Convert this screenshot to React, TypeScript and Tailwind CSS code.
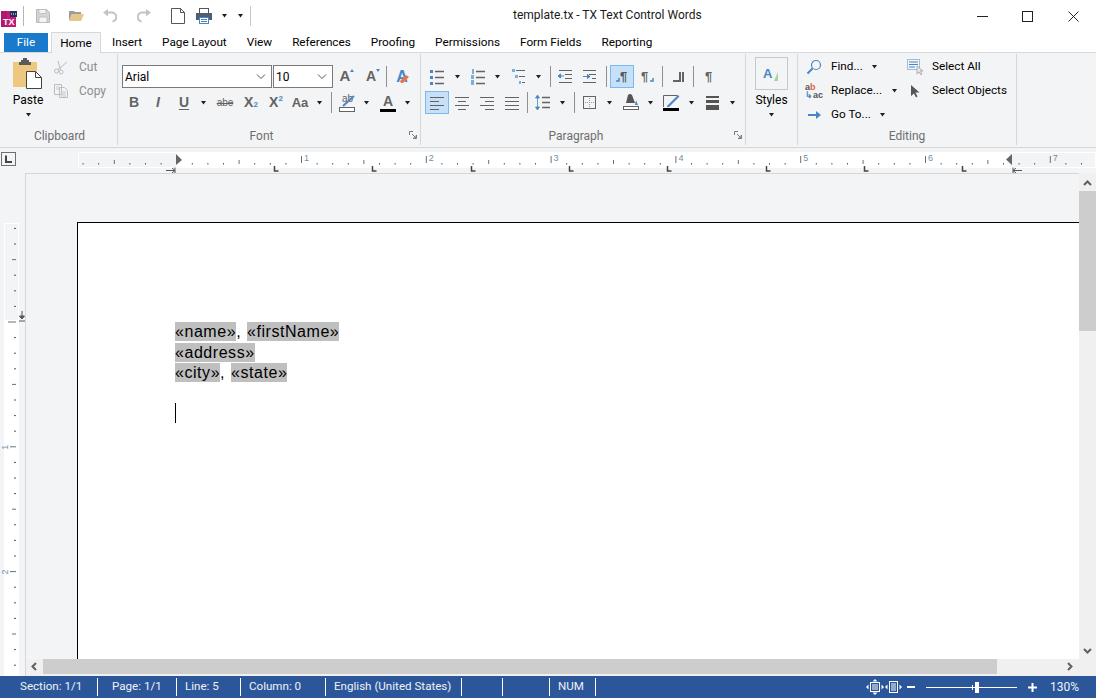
import React from 'react';

const uiFont = { fontFamily: 'Roboto, "Liberation Sans", sans-serif' };

const Caret: React.FC<{ className?: string }> = ({ className = '' }) => (
  <span className={`flex h-[23px] w-[14px] items-center justify-center ${className}`}>
    <svg width="7" height="4" viewBox="0 0 7 4">
      <path d="M1 0h5L3.5 3.5z" fill="#1f1f1f" />
    </svg>
  </span>
);

const Sep: React.FC<{ className?: string }> = ({ className = '' }) => (
  <span className={`my-px h-[21px] w-px bg-[#8f8f8f] ${className}`} />
);

const Ico: React.FC<{ className?: string; active?: boolean; children: React.ReactNode }> = ({ className = '', active, children }) => (
  <span
    className={`flex h-[23px] w-6 items-center justify-center ${active ? 'border border-[#7db9ee] bg-[#c5e0f7]' : ''} ${className}`}
  >
    <svg width={active ? 22 : 24} height={active ? 21 : 23} viewBox={active ? '1 1 22 21' : '0 0 24 23'}>
      {children}
    </svg>
  </span>
);

const GRAY = '#636363';
const BLUE = '#4a86c5';

const Lines: React.FC<{ ys: number[]; x1: number; x2: number; w?: number }> = ({ ys, x1, x2, w = 1 }) => (
  <>
    {ys.map((y) => (
      <path key={y} d={`M${x1} ${y + 0.5}H${x2}`} stroke={GRAY} strokeWidth={w} />
    ))}
  </>
);

const TextGlyph: React.FC<{ className?: string; children: React.ReactNode }> = ({ className = '', children }) => (
  <span
    className={`relative flex h-[23px] w-6 items-center justify-center font-bold text-[#636363] ${className}`}
    style={{ fontFamily: '"Liberation Sans", sans-serif' }}
  >
    {children}
  </span>
);

const Group: React.FC<{ w: string; label: string; launcher?: boolean; labelPad?: string; children: React.ReactNode }> = ({
  w,
  label,
  launcher,
  labelPad = '',
  children,
}) => (
  <div className={`flex h-[91px] flex-col border-r border-[#d6d7d9] ${w}`}>
    <div className="h-[71px] min-h-0">{children}</div>
    <div className={`relative h-[20px] pt-[3px] text-center text-[12px] leading-[17px] text-[#6e6e6e] ${labelPad}`}>
      {label}
      {launcher && (
        <svg className="absolute right-[3px] top-[6px]" width="8" height="8" viewBox="0 0 8 8">
          <path d="M.5 4V.5H4M7.5 4v3.5H4M3 3l4 4M7 4.5V7H4.5" fill="none" stroke="#7a7a7a" />
        </svg>
      )}
    </div>
  </div>
);

const FontSelect: React.FC<{ value: string; w: string; pad: string }> = ({ value, w, pad }) => (
  <div className={`flex h-[23px] items-center justify-between border border-[#7a7a7a] bg-white pr-[5px] text-[12px] text-black ${w} ${pad}`}>
    <span>{value}</span>
    <svg width="10" height="6" viewBox="0 0 10 6">
      <path d="M1 .5l4 4 4-4" fill="none" stroke="#555" />
    </svg>
  </div>
);

const Clipboard = () => (
  <Group w="w-[118px]" label="Clipboard" labelPad="pl-[2px]">
    <div className="flex pt-[4px]">
      <div className="flex w-[56px] flex-col items-center">
        <svg width="30" height="31" viewBox="0 0 30 31">
          <rect x="0" y="4" width="24" height="25" fill="#eec87f" />
          <path d="M8 4V2h2V0h4v2h2v2h2v3H6V4z" fill="#5a5a5a" />
          <path d="M13.5 13.5h9l6 6v11h-15z" fill="#fff" stroke="#444" />
          <path d="M22.5 13.5v6h6" fill="none" stroke="#444" />
        </svg>
        <span className="mt-[3px] text-[12px] leading-[16px] text-black">Paste</span>
        <svg className="mt-[5px]" width="7" height="4" viewBox="0 0 7 4">
          <path d="M1 0h5L3.5 3.5z" fill="#1f1f1f" />
        </svg>
      </div>
      <div className="-mt-[3px] flex flex-col text-[12px] text-[#8d8d8d]">
        <div className="flex h-[24px] items-center">
          <svg width="16" height="16" viewBox="0 0 16 16" className="mr-[10px] -ml-[3px]">
            <circle cx="3.5" cy="12" r="2" fill="none" stroke="#bdbdbd" />
            <circle cx="8" cy="13" r="2" fill="none" stroke="#bdbdbd" />
            <path d="M5 10.5L14 3M7.5 11L5 2" stroke="#bdbdbd" fill="none" />
          </svg>
          Cut
        </div>
        <div className="flex h-[24px] items-center">
          <svg width="16" height="16" viewBox="0 0 16 16" className="mr-[10px] -ml-[3px]">
            <path d="M1.5 1.5h7v10h-7zM6.5 4.5h5l3 3v7h-8z" fill="#f3f4f6" stroke="#bdbdbd" />
            <path d="M3 4h3M3 6h3M8 9h5M8 11h5M8 13h5" stroke="#c9c9c9" />
          </svg>
          Copy
        </div>
      </div>
    </div>
  </Group>
);

const FontGroup = () => (
  <Group w="w-[303px]" label="Font" launcher labelPad="pr-[15px]">
    <div className="pl-[4px] pt-[11px]">
      <div className="flex items-center">
        <FontSelect value="Arial" w="w-[150px]" pad="pl-[2px]" />
        <FontSelect value="10" w="ml-px w-[60px]" pad="pl-[2px]" />
        <TextGlyph className="text-[15px]">
          A
          <span className="absolute right-[3px] top-[4px] h-0 w-0 border-x-[2px] border-b-[3px] border-x-transparent border-b-[#4a86c5]" />
        </TextGlyph>
        <TextGlyph className="ml-[2px] text-[14px]">
          A
          <span className="absolute right-[3px] top-[4px] h-0 w-0 border-x-[2px] border-t-[3px] border-x-transparent border-t-[#4a86c5]" />
        </TextGlyph>
        <Sep className="ml-[3px]" />
        <TextGlyph className="ml-[3px] text-[16px]">
          <span className="text-[#4a86c5]">A</span>
          <svg className="absolute left-[10px] top-[10px]" width="10" height="9" viewBox="0 0 10 9">
            <path d="M0 6l6-6 3 2-6 6H1z" fill="#e5744f" />
          </svg>
        </TextGlyph>
      </div>
      <div className="mt-[3px] flex items-center">
        <TextGlyph className="text-[14px]">B</TextGlyph>
        <TextGlyph className="text-[14px] italic">I</TextGlyph>
        <TextGlyph className="ml-[2px] text-[14px] underline underline-offset-2">U</TextGlyph>
        <Caret />
        <TextGlyph className="ml-[3px] text-[10px] font-normal line-through">abe</TextGlyph>
        <TextGlyph className="ml-[2px] text-[14px]">
          X<sub className="text-[8px] text-[#4a86c5]">2</sub>
        </TextGlyph>
        <TextGlyph className="ml-px text-[14px]">
          X<sup className="text-[8px] text-[#4a86c5]">2</sup>
        </TextGlyph>
        <TextGlyph className="text-[13px]">Aa</TextGlyph>
        <Caret />
        <Sep className="ml-[5px]" />
        <Ico className="ml-[3px]">
          <text x="7" y="11" fontSize="10" fill={GRAY} fontFamily="Liberation Sans">ab</text>
          <path d="M8 15L19 5" stroke={BLUE} strokeWidth="2" />
          <rect x="4.5" y="16.5" width="15" height="4" fill="#fff" stroke={GRAY} />
        </Ico>
        <Caret />
        <TextGlyph className="ml-[3px] pb-[3px] text-[14px] text-[#555]">
          A
          <span className="absolute bottom-[2px] left-[4px] h-[3px] w-4 bg-black" />
        </TextGlyph>
        <Caret />
      </div>
    </div>
  </Group>
);

const ParagraphGroup = () => (
  <Group w="w-[325px]" label="Paragraph" launcher labelPad="pr-[14px]">
    <div className="pl-[4px] pt-[11px]">
      <div className="flex items-center">
        <Ico>
          <path d="M5 5h3v3H5zM5 11h3v3H5zM5 17h3v3H5z" fill={BLUE} />
          <Lines ys={[6, 12, 18]} x1={10} x2={19} w={1.5} />
        </Ico>
        <Caret className="ml-px" />
        <Ico className="ml-[2px]">
          <path d="M6 4h2v5H6zM5 10h3v4H5zM5 15h3v5H5z" fill="#7eaedb" />
          <Lines ys={[6, 12, 18]} x1={10} x2={19} w={1.5} />
        </Ico>
        <Caret />
        <Ico className="ml-[3px]">
          <path d="M5 4h3v3H5zM8 10h3v3H8zM12 16h2v3h-2z" fill="#7eaedb" />
          <path d="M9 5.5h9M12 11.5h6M15 17.5h3" stroke={GRAY} />
        </Ico>
        <Caret />
        <Sep className="ml-[5px]" />
        <Ico className="ml-[2px]">
          <Lines ys={[5, 17]} x1={6} x2={19} />
          <Lines ys={[9, 13]} x1={12} x2={19} />
          <path d="M5 11h6M5 11l2.5-2v4z" stroke={BLUE} fill={BLUE} />
        </Ico>
        <Ico className="ml-px">
          <Lines ys={[5, 17]} x1={5} x2={18} />
          <Lines ys={[9]} x1={11} x2={18} />
          <path d="M5 11.5h7M12 11.5L9.5 9.5v4z" stroke={BLUE} fill={BLUE} />
          <path d="M14 13.5h4" stroke={GRAY} />
        </Ico>
        <Sep className="ml-[4px]" />
        <Ico className="ml-[3px]" active>
          <text x="10" y="16" fontSize="13" fontWeight="700" fill="#555" fontFamily="Liberation Sans">¶</text>
          <path d="M6 16h3v-3" stroke={BLUE} fill="none" strokeWidth="1.5" />
        </Ico>
        <Ico className="ml-px">
          <text x="6" y="16" fontSize="13" fontWeight="700" fill={GRAY} fontFamily="Liberation Sans">¶</text>
          <path d="M18 13v3h-3" stroke={BLUE} fill="none" strokeWidth="1.5" />
        </Ico>
        <Sep className="ml-[3px]" />
        <Ico className="ml-[3px]">
          <path d="M7 15h6v2H7zM13 7h2v10h-2zM16 7h2v10h-2z" fill={GRAY} />
        </Ico>
        <Sep className="ml-[3px]" />
        <Ico className="ml-[3px]">
          <text x="8" y="16" fontSize="13" fontWeight="700" fill={GRAY} fontFamily="Liberation Sans">¶</text>
        </Ico>
      </div>
      <div className="mt-[3px] flex items-center">
        <Ico active>
          <Lines ys={[6, 14]} x1={5} x2={19} />
          <Lines ys={[10, 18]} x1={5} x2={14} />
        </Ico>
        <Ico className="ml-px">
          <Lines ys={[6, 14]} x1={5} x2={19} />
          <Lines ys={[10, 18]} x1={8} x2={16} />
        </Ico>
        <Ico className="ml-px">
          <Lines ys={[6, 14]} x1={5} x2={19} />
          <Lines ys={[10, 18]} x1={10} x2={19} />
        </Ico>
        <Ico className="ml-px">
          <Lines ys={[6, 10, 14, 18]} x1={5} x2={19} />
        </Ico>
        <Sep className="ml-[3px]" />
        <Ico className="ml-[3px]">
          <path d="M6.5 5v13M6.5 4L4.5 7h4zM6.5 19l-2-3h4z" stroke={BLUE} fill={BLUE} strokeWidth="0.8" />
          <Lines ys={[6, 11, 16]} x1={11} x2={19} w={1.5} />
        </Ico>
        <Caret />
        <Sep className="ml-[5px]" />
        <Ico className="ml-[3px]">
          <rect x="5.5" y="5.5" width="12" height="12" fill="none" stroke={GRAY} />
          <path d="M11.5 7v9M7 11.5h9" stroke="#9a9a9a" strokeDasharray="1 1" />
        </Ico>
        <Caret />
        <Ico className="ml-[3px]">
          <path d="M9 4a3 3 0 0 1 4 0l3 8H7l1-4z" fill="#555" />
          <path d="M17 9l2 5h-3z" fill={BLUE} />
          <rect x="4.5" y="15.5" width="15" height="3" fill="#fff" stroke={GRAY} />
        </Ico>
        <Caret />
        <Ico className="ml-[2px]">
          <path d="M4.5 16V4.5h14" fill="none" stroke={GRAY} />
          <path d="M8 15L19 4l1.5 1.5L10 16H8z" fill={BLUE} />
          <rect x="4" y="17" width="16" height="3" fill="#000" />
        </Ico>
        <Caret className="ml-px" />
        <Ico className="ml-[3px]">
          <path d="M5 5h13v2H5zM5 9h13v3H5zM5 14h13v5H5z" fill="#555" />
        </Ico>
        <Caret />
      </div>
    </div>
  </Group>
);

const StylesGroup = () => (
  <Group w="w-[52px]" label="">
    <div className="flex flex-col items-center pt-[3px]">
      <div className="flex h-[33px] w-[33px] items-center justify-center border border-[#c8c8c8]">
        <svg width="20" height="18" viewBox="0 0 20 18">
          <text x="1" y="13" fontSize="13" fontWeight="700" fill={BLUE} fontFamily="Liberation Sans">A</text>
          <path d="M12 16l4-9v9z" fill="#a5d3a0" />
        </svg>
      </div>
      <span className="mt-[2px] text-[12px] leading-[16px] text-black">Styles</span>
      <svg className="mt-[5px]" width="7" height="4" viewBox="0 0 7 4">
        <path d="M1 0h5L3.5 3.5z" fill="#1f1f1f" />
      </svg>
    </div>
  </Group>
);

const EditRow: React.FC<{ icon: React.ReactNode; label: string; caret?: boolean }> = ({ icon, label, caret }) => (
  <div className="flex h-[24px] items-center text-[11.75px] text-black">
    <span className="flex w-[24px] justify-center">{icon}</span>
    <span className="ml-[5px]">{label}</span>
    {caret && <Caret className="ml-[5px]" />}
  </div>
);

const EditingGroup = () => (
  <Group w="w-[219px]" label="Editing">
    <div className="flex pl-[4px] pt-px">
      <div className="w-[101px]">
        <EditRow
          label="Find..."
          caret
          icon={
            <svg width="16" height="16" viewBox="0 0 16 16">
              <circle cx="10" cy="6" r="4.5" fill="none" stroke={BLUE} strokeWidth="1.2" />
              <path d="M6.5 9.5L1.5 14.5" stroke={BLUE} strokeWidth="2" />
            </svg>
          }
        />
        <EditRow
          label="Replace..."
          caret
          icon={
            <span className="flex flex-col text-[9px] font-bold leading-[8px]" style={{ fontFamily: '"Liberation Sans", sans-serif' }}>
              <span className="text-[#555]">a<span className="text-[#e0654a]">b</span></span>
              <span className="text-[#555]"><span className="text-[#4a86c5]">↳</span>ac</span>
            </span>
          }
        />
        <EditRow
          label="Go To..."
          caret
          icon={
            <svg width="14" height="10" viewBox="0 0 14 10">
              <path d="M1 5h9" stroke={BLUE} strokeWidth="2" />
              <path d="M9 1l5 4-5 4z" fill={BLUE} />
            </svg>
          }
        />
      </div>
      <div>
        <EditRow
          label="Select All"
          icon={
            <svg width="18" height="18" viewBox="0 0 18 18">
              <rect x="1.5" y="1.5" width="12" height="10" fill="none" stroke={BLUE} strokeDasharray="1 1" />
              <path d="M3 4h9M3 6.5h9M3 9h6" stroke={BLUE} />
              <path d="M11 8v8l2-2 2 3 1-1-2-3h3z" fill="#e8e8e8" stroke="#9a9a9a" strokeWidth="0.7" />
            </svg>
          }
        />
        <EditRow
          label="Select Objects"
          icon={
            <svg width="12" height="14" viewBox="0 0 12 14">
              <path d="M2 1v11l3-2.5 2 4 1.5-1-2-4h4z" fill="#555" />
            </svg>
          }
        />
      </div>
    </div>
  </Group>
);

const HRuler = () => {
  const ticks: React.ReactNode[] = [];
  for (let i = -6; i <= 59; i++) {
    const x = 176.7 + i * 15.6;
    if (x < 80 || x > 1094) continue;
    if (i % 8 === 0) {
      if (i !== 0) ticks.push(<path key={i} d={`M${x} 8v7`} stroke="#6f6f6f" />);
    } else if (i % 4 === 0) {
      ticks.push(<path key={i} d={`M${x} 12v4`} stroke="#6f6f6f" />);
    } else {
      ticks.push(<path key={i} d={`M${x} 15v1.5`} stroke="#555" />);
    }
  }
  const tabs = [274, 372, 471, 569, 667, 766, 864, 962];
  return (
    <svg width="1096" height="25" viewBox="0 0 1096 25" className="block">
      <rect x="1.5" y="4.5" width="14" height="13" fill="#f3f4f6" stroke="#6f6f6f" />
      <path d="M6 7.5v6.5h6" fill="none" stroke="#444" strokeWidth="2" />
      <rect x="78.5" y="4.5" width="98" height="15" fill="#f3f4f6" stroke="#fff" />
      <rect x="177" y="4" width="831" height="16" fill="#fff" />
      <rect x="1008.5" y="4.5" width="87" height="15" fill="#f3f4f6" stroke="#fff" />
      {ticks}
      {[1, 2, 3, 4, 5, 6, 7].map((n) => (
        <text key={n} x={176.7 + n * 124.8 + 2.5} y="13" fontSize="9" fill="#6b8fb0" fontFamily="Liberation Sans">
          {n}
        </text>
      ))}
      <path d="M176 6l6 6-6 5z" fill="#666" />
      <path d="M1012 6l-6 5.5 6 5.5z" fill="#666" />
      <path d="M166 22.5h9M175 19.5v6M172 20l3 2.5-3 2.5" fill="none" stroke="#555" />
      <path d="M1022 22.5h-9M1013 19.5v6M1016 20l-3 2.5 3 2.5" fill="none" stroke="#555" />
      {tabs.map((x) => (
        <path key={x} d={`M${x + 0.5} 18v5h4`} fill="none" stroke="#444" strokeWidth="1.5" />
      ))}
    </svg>
  );
};

const VRuler = () => {
  const ticks: React.ReactNode[] = [];
  for (let i = -6; i <= 22; i++) {
    const y = 149 + i * 15.6;
    if (i % 8 === 0) {
      ticks.push(<path key={i} d={`M${i === 0 ? 8 : 10} ${y}H16`} stroke="#6f6f6f" />);
    } else if (i % 4 === 0) {
      ticks.push(<path key={i} d={`M12 ${y}H16`} stroke="#6f6f6f" />);
    } else {
      ticks.push(<path key={i} d={`M14 ${y}H16`} stroke="#555" />);
    }
  }
  return (
    <svg width="25" height="503" viewBox="0 0 25 503" className="block">
      <rect x="4.5" y="50.5" width="14" height="97" fill="#f3f4f6" stroke="#fff" />
      <rect x="4" y="148" width="15" height="355" fill="#fff" />
      {ticks}
      {[1, 2].map((n) => (
        <text key={n} transform={`translate(8 ${149 + n * 124.8 + 3}) rotate(-90)`} fontSize="9" fill="#6b8fb0" fontFamily="Liberation Sans">
          {n}
        </text>
      ))}
      <path d="M22 138v8M19.5 143l2.5 3 2.5-3zM19 148h6" fill="#555" stroke="#555" />
    </svg>
  );
};

const Field: React.FC<{ className?: string; children: React.ReactNode }> = ({ className = '', children }) => (
  <span className={`inline-block h-[19px] bg-[#bfbfbf] leading-[19px] tracking-[0.55px] ${className}`}>{children}</span>
);

const Arrow: React.FC<{ d: string }> = ({ d }) => (
  <svg width="9" height="9" viewBox="0 0 9 9">
    <path d={d} fill="none" stroke="#606060" strokeWidth="2" />
  </svg>
);

const Document = () => (
  <div className="flex h-[503px]">
    <div className="w-[25px] shrink-0">
      <VRuler />
    </div>
    <div className="flex min-w-0 flex-1 flex-col border-l border-t border-[#d6d7d9]">
      <div className="flex min-h-0 flex-1 flex-col bg-[#f3f4f6] pl-[51px] pt-[48px]">
        <div
          className="flex-1 border-l border-t border-black bg-white pl-[97px] pt-[97px] text-[16px] text-black"
          style={{ fontFamily: '"Liberation Sans", Arial, sans-serif' }}
        >
          <div className="h-[20.5px]">
            <Field>«name»</Field>, <Field className="ml-[2px]">«firstName»</Field>
          </div>
          <div className="h-[20.5px]">
            <Field>«address»</Field>
          </div>
          <div className="h-[20.5px]">
            <Field>«city»</Field>, <Field className="ml-[2px]">«state»</Field>
          </div>
          <div className="mt-[21px] h-[20px] w-px bg-black" />
        </div>
      </div>
      <div className="flex h-[17px] items-center bg-[#f0f0f0] pb-[2px]">
        <span className="flex w-[17px] justify-center">
          <Arrow d="M6 1L2.5 4.5 6 8" />
        </span>
        <span className="h-[15px] w-[954px] bg-[#cdcdcd]" />
        <span className="ml-auto mr-[5px] flex">
          <Arrow d="M3 1l3.5 3.5L3 8" />
        </span>
      </div>
    </div>
    <div className="flex w-[17px] shrink-0 flex-col items-center bg-[#f0f0f0]">
      <span className="flex h-[18px] items-center pt-[3px]">
        <Arrow d="M1 6l3.5-3.5L8 6" />
      </span>
      <span className="h-[140px] w-full bg-[#cdcdcd]" />
      <span className="mt-auto flex h-[19px] items-start pt-[6px]">
        <Arrow d="M1 3l3.5 3.5L8 3" />
      </span>
      <span className="h-[17px]" />
    </div>
  </div>
);

const StatusCell: React.FC<{ w: string; pad?: string; children?: React.ReactNode }> = ({ w, pad = 'pl-2', children }) => (
  <div className={`relative flex h-full items-center ${w} ${pad}`}>
    {children}
    <span className="absolute right-0 top-[2px] h-[18px] w-px bg-white" />
  </div>
);

const StatusBar = () => (
  <div className="flex h-[22px] items-center bg-[#2b579a] text-[11.6px] text-[#eef2f8]">
    <StatusCell w="w-[98px]" pad="pl-5">Section: 1/1</StatusCell>
    <StatusCell w="w-[79px]" pad="pl-[14px]">Page: 1/1</StatusCell>
    <StatusCell w="w-[64px]">Line: 5</StatusCell>
    <StatusCell w="w-[85px]">Column: 0</StatusCell>
    <StatusCell w="w-[136px]">English (United States)</StatusCell>
    <StatusCell w="w-[41px]" />
    <StatusCell w="w-[47px]" />
    <StatusCell w="w-[46px]">NUM</StatusCell>
    <div className="ml-auto flex items-center">
      <svg width="18" height="16" viewBox="0 0 18 16" className="mr-px">
        <path d="M9 0l2.5 2.5h-5zM9 16l-2.5-2.5h5zM0 8l2.5-2.5v5zM18 8l-2.5-2.5v5z" fill="#fff" />
        <rect x="4.5" y="3.5" width="9" height="9" fill="none" stroke="#fff" />
        <path d="M6 6h6M6 8h6M6 10h6" stroke="#fff" />
      </svg>
      <svg width="17" height="14" viewBox="0 0 17 14">
        <path d="M0 7l2.5-2.5v5zM17 7l-2.5-2.5v5z" fill="#fff" />
        <rect x="4.5" y="1.5" width="8" height="11" fill="none" stroke="#fff" />
        <path d="M6 4h5M6 6h5M6 8h5M6 10h5" stroke="#fff" />
      </svg>
      <span className="ml-[5px] h-[2px] w-[8px] bg-white" />
      <div className="relative ml-[11px] h-px w-[91px] bg-white">
        <span className="absolute left-[49px] top-[-5px] h-[11px] w-[4px] bg-white" />
        <span className="absolute left-[46px] top-[-2px] h-[5px] w-px bg-white" />
      </div>
      <svg width="9" height="9" viewBox="0 0 9 9" className="ml-[11px]">
        <path d="M0 4.5h9M4.5 0v9" stroke="#fff" strokeWidth="2" />
      </svg>
      <span className="ml-[13px] mr-[17px] text-[12px]">130%</span>
    </div>
  </div>
);

const TitleBar = () => (
  <div className="relative flex h-[32px] items-center bg-white">
    <svg width="22" height="22" viewBox="0 0 22 22" className="ml-px">
      <rect x="0" y="6" width="15" height="16" fill="#b0186f" />
      <path d="M6 6h9v16H6z" fill="#d11f7f" opacity="0.6" />
      <rect x="9" y="6" width="7" height="6" fill="#23305c" />
      <path d="M10 9h5" stroke="#fff" strokeDasharray="1 1" />
      <text x="2" y="20" fontSize="9" fontWeight="700" fill="#fff" fontFamily="Liberation Sans">TX</text>
    </svg>
    <span className="h-[20px] w-px bg-[#b5b5b5]" />
    <svg width="14" height="14" viewBox="0 0 14 14" className="ml-[12px]">
      <path d="M.5.5h10l3 3v10H.5z" fill="#d4d4d4" stroke="#b9b9b9" />
      <path d="M3 .5h7v4H3zM3 8h8v5.5H3z" fill="#f4f4f4" stroke="#b9b9b9" strokeWidth="0.8" />
    </svg>
    <svg width="15" height="12" viewBox="0 0 15 12" className="ml-[19px]">
      <path d="M0 1h5l1 1h6v2H3L0 11z" fill="#9c9c9c" />
      <path d="M3 4h12l-3 7H0z" fill="#e6c78b" />
    </svg>
    <svg width="14" height="14" viewBox="0 0 14 14" className="ml-[19px]">
      <path d="M3 3.5h5a4.5 4.5 0 0 1 1.5 9" fill="none" stroke="#c4c4c4" strokeWidth="2" />
      <path d="M5 0v7.5L0 3.5z" fill="#c4c4c4" />
    </svg>
    <svg width="14" height="14" viewBox="0 0 14 14" className="ml-[20px] -scale-x-100">
      <path d="M3 3.5h5a4.5 4.5 0 0 1 1.5 9" fill="none" stroke="#c4c4c4" strokeWidth="2" />
      <path d="M5 0v7.5L0 3.5z" fill="#c4c4c4" />
    </svg>
    <svg width="14" height="16" viewBox="0 0 14 16" className="ml-[20px]">
      <path d="M.5.5h9l4 4v11H.5z" fill="#fff" stroke="#555" />
      <path d="M9.5.5v4h4" fill="none" stroke="#555" />
    </svg>
    <svg width="16" height="16" viewBox="0 0 16 16" className="ml-[11px]">
      <rect x="3.5" y=".5" width="9" height="5" fill="#fff" stroke="#555" />
      <rect x="0" y="5" width="16" height="7" fill="#4f5f70" />
      <rect x="3.5" y="9.5" width="9" height="6" fill="#fff" stroke={BLUE} />
      <path d="M5 11.5h6M5 13.5h6" stroke={BLUE} />
    </svg>
    <Caret className="ml-[5px]" />
    <Caret className="ml-[2px]" />
    <span className="ml-[3px] h-[20px] w-px bg-[#c8c8c8]" />
    <span className="absolute left-[513px] top-[7px] text-[12px] leading-[17px] text-[#1a1a1a]">template.tx - TX Text Control Words</span>
    <div className="ml-auto flex items-center">
      <svg width="11" height="11" viewBox="0 0 11 11">
        <path d="M0 5.5h11" stroke="#222" />
      </svg>
      <svg width="11" height="11" viewBox="0 0 11 11" className="ml-[34px]">
        <rect x=".5" y=".5" width="10" height="10" fill="none" stroke="#222" />
      </svg>
      <svg width="11" height="11" viewBox="0 0 11 11" className="ml-[35px] mr-[17px]">
        <path d="M.5.5l10 10M10.5.5l-10 10" stroke="#222" />
      </svg>
    </div>
  </div>
);

const tabs = ['Insert', 'Page Layout', 'View', 'References', 'Proofing', 'Permissions', 'Form Fields', 'Reporting'];

const TabStrip = () => (
  <div className="flex h-[20px] items-end bg-white pl-[4px] text-[11.75px] text-black">
    <div className="flex h-[19px] w-[44px] items-center justify-center bg-[#1979ca] text-white">File</div>
    <div className="relative z-10 -mb-px ml-[3px] flex h-[21px] w-[50px] items-center justify-center border-x border-t border-[#d6d7d9] bg-[#f3f4f6] pt-[2px]">
      Home
    </div>
    <div className="flex h-[20px] items-center gap-[20px] pl-[11px] pt-[2px]">
      {tabs.map((t) => (
        <span key={t}>{t}</span>
      ))}
    </div>
  </div>
);

export default function App() {
  return (
    <div className="h-[698px] w-[1096px] overflow-hidden bg-[#f3f4f6]" style={uiFont}>
      <TitleBar />
      <TabStrip />
      <div className="flex h-[96px] border-y border-[#d6d7d9] pt-px">
        <Clipboard />
        <FontGroup />
        <ParagraphGroup />
        <StylesGroup />
        <EditingGroup />
      </div>
      <HRuler />
      <Document />
      <StatusBar />
    </div>
  );
}
